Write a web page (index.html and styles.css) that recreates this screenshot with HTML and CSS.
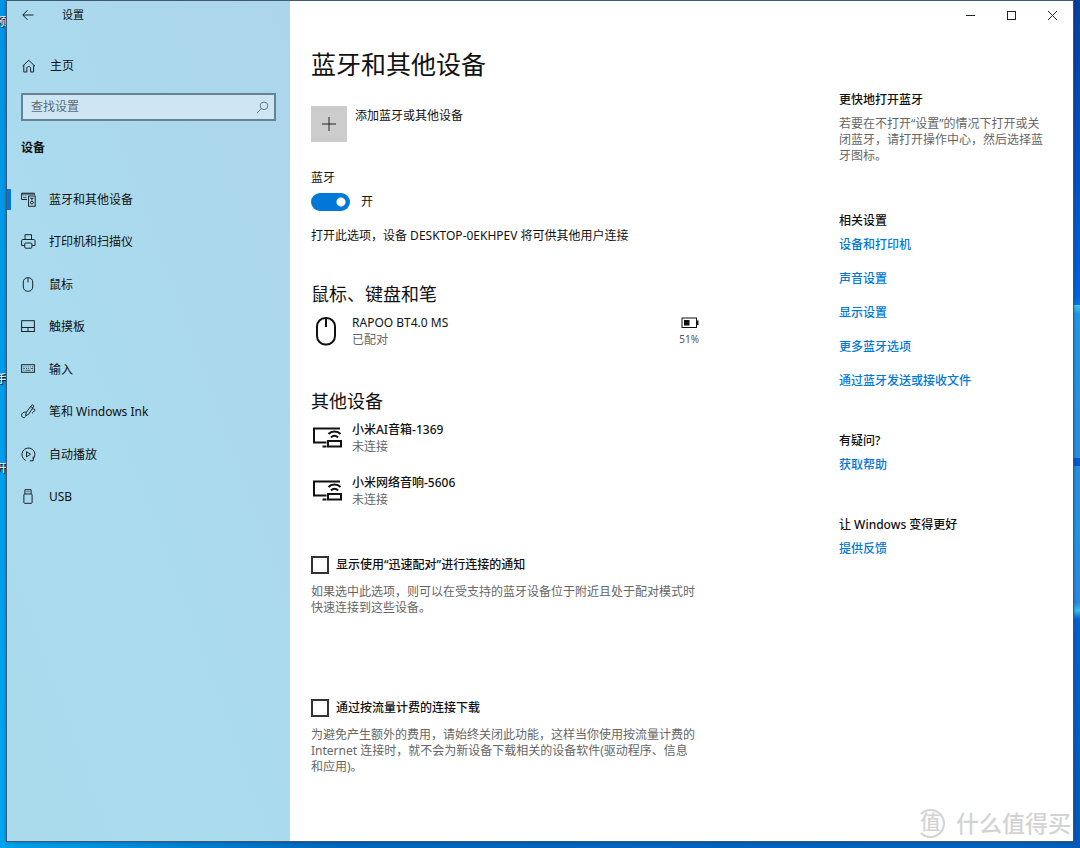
FILE: index.html
```html
<!DOCTYPE html>
<html lang="zh-CN">
<head>
<meta charset="utf-8">
<title>设置</title>
<meta name="viewport" content="width=device-width, initial-scale=1">
<link rel="stylesheet" href="styles.css">
</head>
<body>
<div class="desktop">
  <span class="desk-label desk-label-a">预</span>
  <span class="desk-label desk-label-b">手</span>
  <span class="desk-label desk-label-c">开</span>

  <div class="window">
    <aside class="sidebar">
      <header class="side-title">
        <button class="back" aria-label="返回">
          <svg width="12" height="12" viewBox="0 0 12 12"><path d="M11.500 6H1M5.500 1.200L.8 6l4.700 4.800"/></svg>
        </button>
        <span class="app-name">设置</span>
      </header>

      <a class="home" href="#">
        <svg class="icon" width="15" height="15" viewBox="0 0 15 15"><path d="M1.500 7.200L7.800 1.300l6.200 5.900M2.800 6.200V13h3V9.200c0-1 .8-1.700 1.900-1.700s1.900.7 1.900 1.700V13h3V6.200"/></svg>
        <span>主页</span>
      </a>

      <label class="search">
        <input type="search" placeholder="查找设置" aria-label="查找设置">
        <svg width="13" height="13" viewBox="0 0 13 13"><circle cx="8" cy="4.800" r="3.800"/><path d="M5.300 7.600L1 12"/></svg>
      </label>

      <h2 class="side-heading">设备</h2>

      <nav class="nav">
        <a class="nav-item selected" href="#">
          <svg class="icon" width="15" height="15" viewBox="0 0 15 15"><path d="M6 7.500H.6V1.200h12.800v1.500M.6 2h12.800"/><path class="thin" d="M2.300 3.800h1M4.500 3.800h1M2.300 5.600h3.200"/><rect x="7.600" y="4" width="6.600" height="10.300"/><circle cx="10.900" cy="10.600" r="1.400"/><path d="M9.300 6.300h3.200M10.900 6v2.400"/></svg>
          <span>蓝牙和其他设备</span>
        </a>
        <a class="nav-item" href="#">
          <svg class="icon" width="15" height="15" viewBox="0 0 15 15"><path d="M4 5.500V.7h6.500v4.800M3.700 11.500H.6v-4.800c0-.7.500-1.200 1.200-1.200h11c.7 0 1.200.5 1.200 1.200v4.800h-3"/><rect x="3.700" y="9" width="7.200" height="5.200" rx="1"/></svg>
          <span>打印机和扫描仪</span>
        </a>
        <a class="nav-item" href="#">
          <svg class="icon" width="15" height="15" viewBox="0 0 15 15"><rect x="2.300" y=".7" width="9.400" height="13.600" rx="4.300"/><path d="M7 .7v4.600"/></svg>
          <span>鼠标</span>
        </a>
        <a class="nav-item" href="#">
          <svg class="icon" width="15" height="15" viewBox="0 0 15 15"><rect x=".6" y="1.700" width="12.800" height="10.800"/><path d="M.6 8.500h12.800M7 8.500v4"/></svg>
          <span>触摸板</span>
        </a>
        <a class="nav-item" href="#">
          <svg class="icon" width="15" height="15" viewBox="0 0 15 15"><rect x=".6" y="2.700" width="12.800" height="7.600"/><path class="thin" d="M2.300 4.800h1M4.500 4.800h1M6.700 4.800h1M8.900 4.800h1M11 4.800h1M2.300 6.500h1.600M5 6.500h1M7.200 6.500h1M9.700 6.500H12M2.300 8.300h1M4.500 8.300h5M11 8.300h1"/></svg>
          <span>输入</span>
        </a>
        <a class="nav-item" href="#">
          <svg class="icon" width="15" height="15" viewBox="0 0 15 15"><path d="M4.600 11.800l.8-3.600L10.600 1.300c.9-1 2.500 0 1.900 1.400L7.700 10.200 4.600 11.800M9.700 2.600l2.200 1.500M5.100 8.200C3 7.500.6 9 .6 11.200c0 2.300 2.300 3.200 3.900 1.500M11.500 5c2.700-.3 3.300 1.500 1.500 2.300-1 .4-1.800 1.200-1.500 2.100"/></svg>
          <span>笔和 Windows Ink</span>
        </a>
        <a class="nav-item" href="#">
          <svg class="icon" width="15" height="15" viewBox="0 0 15 15"><path d="M4.700 13.400A6.500 6.500 0 1 1 12 12.100M12.200 9.500v4.300H8.800M5.500 4.700v5.200l4-2.600z"/></svg>
          <span>自动播放</span>
        </a>
        <a class="nav-item" href="#">
          <svg class="icon" width="15" height="15" viewBox="0 0 15 15"><path d="M3.900 5V.7h6.200V5"/><rect x="2.900" y="5" width="8.200" height="9.300" rx=".8"/><path d="M5.500 2.700h1M7.500 2.700h1"/></svg>
          <span>USB</span>
        </a>
      </nav>
    </aside>

    <div class="pane">
      <header class="caption">
        <button aria-label="最小化"><svg width="11" height="11" viewBox="0 0 11 11"><path d="M1 5.500h9"/></svg></button>
        <button aria-label="最大化"><svg width="11" height="11" viewBox="0 0 11 11"><rect x="1.500" y="1.500" width="8" height="8"/></svg></button>
        <button aria-label="关闭"><svg width="11" height="11" viewBox="0 0 11 11"><path d="M1 1l9 9M10 1l-9 9"/></svg></button>
      </header>

      <div class="columns">
        <main class="content">
          <h1>蓝牙和其他设备</h1>

          <button class="add">
            <span class="add-box"><svg width="16" height="16" viewBox="0 0 16 16"><path d="M8 1v14M1 8h14"/></svg></span>
            <span class="add-label">添加蓝牙或其他设备</span>
          </button>

          <p class="toggle-title" id="bt-title">蓝牙</p>
          <label class="toggle">
            <input type="checkbox" role="switch" aria-labelledby="bt-title" checked>
            <span>开</span>
          </label>
          <p class="discover">打开此选项，设备 DESKTOP-0EKHPEV 将可供其他用户连接</p>

          <h2>鼠标、键盘和笔</h2>
          <div class="device">
            <svg class="device-icon" width="32" height="34" viewBox="0 0 32 34"><rect x="6" y="4" width="18" height="26.500" rx="8.500"/><path d="M15 4v9"/></svg>
            <div class="device-text">
              <p>RAPOO BT4.0 MS</p>
              <p class="muted">已配对</p>
            </div>
            <div class="battery">
              <svg width="18" height="17" viewBox="0 0 18 17"><rect class="line" x="1" y="4" width="14.500" height="9.500"/><path class="fill" d="M3 6h5.500v5.500H3zM16 6.500h1.500v4.500H16z"/></svg>
              <span>51%</span>
            </div>
          </div>

          <h2>其他设备</h2>
          <div class="device">
            <svg class="device-icon wireless" width="32" height="34" viewBox="0 0 32 34"><path d="M29 7.500H3v14h12.500M11.500 25.500h4"/><rect x="17" y="20" width="13" height="5.500"/><path d="M17.500 13c3-3.400 9-3.400 12 0M20 16.500c2-2.200 5-2.200 7 0"/></svg>
            <div class="device-text">
              <p class="name">小米AI音箱-1369</p>
              <p class="muted">未连接</p>
            </div>
          </div>
          <div class="device">
            <svg class="device-icon wireless" width="32" height="34" viewBox="0 0 32 34"><path d="M29 7.500H3v14h12.500M11.500 25.500h4"/><rect x="17" y="20" width="13" height="5.500"/><path d="M17.500 13c3-3.400 9-3.400 12 0M20 16.500c2-2.200 5-2.200 7 0"/></svg>
            <div class="device-text">
              <p class="name">小米网络音响-5606</p>
              <p class="muted">未连接</p>
            </div>
          </div>

          <label class="check first-check"><input type="checkbox"><span>显示使用“迅速配对”进行连接的通知</span></label>
          <p class="muted">如果选中此选项，则可以在受支持的蓝牙设备位于附近且处于配对模式时快速连接到这些设备。</p>

          <label class="check second-check"><input type="checkbox"><span>通过按流量计费的连接下载</span></label>
          <p class="muted">为避免产生额外的费用，请始终关闭此功能，这样当你使用按流量计费的 Internet 连接时，就不会为新设备下载相关的设备软件(驱动程序、信息和应用)。</p>
        </main>

        <aside class="related">
          <section>
            <h3>更快地打开蓝牙</h3>
            <p class="muted">若要在不打开“设置”的情况下打开或关闭蓝牙，请打开操作中心，然后选择蓝牙图标。</p>
          </section>
          <section>
            <h3>相关设置</h3>
            <div class="links">
              <a href="#">设备和打印机</a>
              <a href="#">声音设置</a>
              <a href="#">显示设置</a>
              <a href="#">更多蓝牙选项</a>
              <a href="#">通过蓝牙发送或接收文件</a>
            </div>
          </section>
          <section>
            <h3>有疑问?</h3>
            <div class="links"><a href="#">获取帮助</a></div>
          </section>
          <section>
            <h3>让 Windows 变得更好</h3>
            <div class="links"><a href="#">提供反馈</a></div>
          </section>
        </aside>
      </div>
    </div>
  </div>

  <div class="watermark"><span class="seal">值</span><span>什么值得买</span></div>
</div>
</body>
</html>
```

FILE: styles.css
```css
* {
  box-sizing: border-box;
}

body,
h1,
h2,
h3,
p {
  margin: 0;
}

body {
  font: 12px/16px "Noto Sans", "Noto Sans CJK SC", sans-serif;
  color: #111;
}

button,
input {
  font: inherit;
  color: inherit;
}

button {
  padding: 0;
  border: 0;
  background: none;
}

a {
  color: inherit;
  text-decoration: none;
}

svg {
  flex: none;
  fill: none;
  stroke: #1c2429;
}

/* Desktop behind the window */
.desktop {
  position: relative;
  display: flex;
  min-height: 100vh;
  padding: 1px 7px 7px;
  overflow: hidden;
  background:
    linear-gradient(#0b3f9f, #0750c4 20%, #0064dc 35%, #0a7be0 36%, #3fd0e6 36%, #1f9ae6 37%, #2b8de0 54%, #0558cf 54%, #0558cf 55%, #2b8de0 55%, #2295e6 63%, #2b88e0 71%, #37c0e8 72%, #0562cf 73%, #0558b8) right / 8px 100% no-repeat,
    linear-gradient(90deg, #00a2ec, #0068c0 30%, #0060c0) bottom / 100% 8px no-repeat,
    linear-gradient(#0095e8, #00a6f2) left / 8px 100% no-repeat,
    #526577;
}

.desk-label {
  position: absolute;
  left: -4px;
  font-size: 11px;
  color: #fff;
  text-shadow: 1px 1px 1px #000;
}

.desk-label-a {
  top: 14px;
}

.desk-label-b {
  top: 371px;
}

.desk-label-c {
  top: 460px;
}

.window {
  position: relative;
  display: flex;
  flex: 1;
  background: #fff;
  box-shadow: 0 0 0 1px #3d5a70, 0 0 4px rgba(0, 0, 0, 0.5);
}

/* Sidebar */
.sidebar {
  flex: none;
  width: 283px;
  background: linear-gradient(250deg, #acd5eb, #abd8ec 35%, #aadbee 60%, #aadbed);
}

.side-title {
  display: flex;
  align-items: center;
  gap: 28px;
  height: 28px;
  padding-left: 15px;
}

.back {
  display: flex;
}

.app-name {
  font-size: 11px;
}

.home {
  display: flex;
  align-items: center;
  gap: 14px;
  height: 34px;
  margin-top: 20px;
  padding-left: 14px;
}

.search {
  display: flex;
  align-items: center;
  height: 28px;
  margin: 10px 14px 0;
  padding: 0 5px 0 8px;
  border: 2px solid #668392;
  background: #cee6f4;
}

.search input {
  flex: 1;
  min-width: 0;
  padding: 0;
  border: 0;
  outline: 0;
  background: none;
}

.search input::placeholder {
  color: #5c6b74;
  opacity: 1;
}

.search svg {
  stroke: #637986;
}

.side-heading {
  margin: 19px 14px 0;
  font-size: 12px;
  line-height: 16px;
  font-weight: 700;
}

.nav {
  display: grid;
  grid-auto-rows: 1fr;
  min-height: 340px;
  margin-top: 22px;
}

.nav-item {
  display: flex;
  align-items: center;
  gap: 13px;
  padding-left: 14px;
}

.nav-item span {
  padding-top: 1px;
}

.selected {
  background: linear-gradient(#0078d7, #0078d7) left / 4px 21px no-repeat;
}

.thin {
  opacity: 0.7;
}

/* Main pane */
.pane {
  flex: 1;
  min-width: 0;
}

.caption {
  display: flex;
  justify-content: flex-end;
  height: 28px;
}

.caption button {
  display: flex;
  align-items: center;
  justify-content: center;
  width: 41px;
}

.columns {
  display: flex;
  justify-content: space-between;
  padding: 19px 24px 0 21px;
}

.content {
  width: 388px;
}

h1 {
  font-size: 25px;
  line-height: 32px;
  font-weight: 400;
}

.content h2 {
  margin: 38px 0 8px;
  font-size: 18px;
  line-height: 24px;
  font-weight: 400;
}

.add {
  display: flex;
  gap: 8px;
  margin-top: 26px;
}

.add-label {
  padding-top: 2px;
}

.add-box {
  display: flex;
  align-items: center;
  justify-content: center;
  width: 36px;
  height: 36px;
  background: #ccc;
}

.toggle-title {
  margin-top: 28px;
}

.toggle {
  display: flex;
  align-items: center;
  gap: 11px;
  height: 18px;
  margin-top: 7px;
}

.toggle input {
  appearance: none;
  width: 39px;
  height: 18px;
  margin: 0;
  border-radius: 9px;
  background: radial-gradient(circle at 30px 9px, #fff 4px, #0078d7 5px);
}

.discover {
  margin-top: 17px;
}

.device {
  display: flex;
}

.content .device + h2 {
  margin-top: 41px;
}

.device + .device {
  margin-top: 19px;
}

.device-icon {
  margin-right: 9px;
  stroke: #111;
  stroke-width: 2;
}

.device-text {
  flex: 1;
  line-height: 17px;
}

.name {
  font-weight: 500;
}

.muted {
  color: #666;
}

.battery {
  display: flex;
  flex-direction: column;
  align-items: flex-end;
  font-size: 10px;
  color: #555;
}

.battery .line {
  stroke: #111;
}

.battery .fill {
  fill: #111;
  stroke: none;
}

.check {
  display: flex;
  align-items: center;
  gap: 7px;
  height: 18px;
  margin-bottom: 10px;
  font-weight: 500;
}

.first-check {
  margin-top: 48px;
}

.second-check {
  margin-top: 83px;
}

.check input {
  appearance: none;
  width: 18px;
  height: 18px;
  margin: 0;
  border: 2px solid #333;
  background: #fff;
}

/* Related links */
.related {
  width: 210px;
  margin-top: 44px;
}

.related section + section {
  margin-top: 44px;
}

.related section:nth-child(2) {
  margin-top: 49px;
}

h3 {
  margin-bottom: 8px;
  font-size: 12px;
  line-height: 16px;
  font-weight: 500;
}

.links {
  display: flex;
  flex-direction: column;
  align-items: flex-start;
  gap: 18px;
  color: #0078d7;
  font-weight: 500;
}

.watermark {
  position: absolute;
  right: 9px;
  bottom: 9px;
  display: flex;
  align-items: center;
  gap: 11px;
  font-size: 23px;
  line-height: 32px;
  font-weight: 500;
  color: #d3d3d3;
}

.seal {
  width: 29px;
  height: 29px;
  border: 2px solid #d3d3d3;
  border-left-color: transparent;
  border-radius: 50%;
  font-size: 20px;
  line-height: 24px;
  text-align: center;
}
```
